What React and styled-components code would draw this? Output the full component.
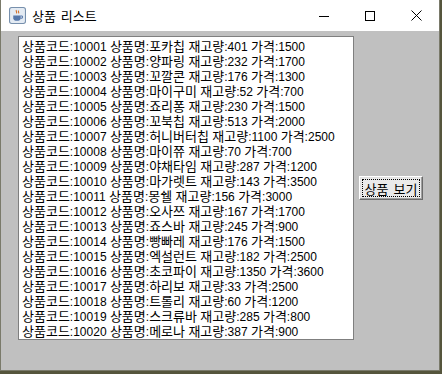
import React from "react";
import styled, { createGlobalStyle } from "styled-components";

const GlobalStyle = createGlobalStyle`
  html, body {
    margin: 0;
    padding: 0;
    background: #55553c;
    overflow: hidden;
  }
`;

const Window = styled.div`
  width: 438px;
  height: 370px;
  border: 1px solid #7a7a6a;
  border-top: none;
  background: #c0c0c0;
  display: flex;
  flex-direction: column;
`;

const TitleBar = styled.div`
  height: 31px;
  background: #fff;
  display: flex;
  align-items: center;
  padding-left: 8px;
  font-family: "Noto Sans CJK KR", sans-serif;
  font-size: 13px;
  color: #000;
`;

const TitleText = styled.span`
  margin-left: 6px;
  flex: 1;
  padding-bottom: 1px;
  word-spacing: 2px;
`;

const Controls = styled.div`
  display: flex;
  height: 100%;
`;

const CtrlButton = styled.div`
  width: 46px;
  height: 100%;
  display: flex;
  align-items: center;
  justify-content: center;
`;

const Content = styled.div`
  display: flex;
  align-items: center;
  padding: 5px 0 0 17px;
  gap: 5px;
`;

const ListBox = styled.div`
  width: 336px;
  height: 304px;
  box-sizing: border-box;
  border: 1px solid #7f7f7f;
  background: #fff;
  padding: 1px 0 0 3px;
  overflow: hidden;
`;

const Row = styled.div`
  height: 15px;
  line-height: 15px;
  font-family: "Liberation Sans", "Noto Sans CJK KR", sans-serif;
  font-size: 12px;
  color: #000;
  white-space: nowrap;
`;

const K = styled.span`
  font-family: "Noto Sans CJK KR", sans-serif;
  font-size: 13px;
`;

const Button = styled.button`
  width: 64px;
  height: 24px;
  padding: 2px;
  background: #eaeaea;
  border: 1px solid;
  border-color: #fff #6a6a6a #6a6a6a #fff;
  box-shadow: inset -1px -1px 0 #a0a0a0, inset 1px 1px 0 #e3e3e3;
  font-family: "Noto Sans CJK KR", sans-serif;
  font-size: 13px;
  color: #000;
  display: flex;
`;

const Focus = styled.span`
  flex: 1;
  border: 1px dotted #000;
  display: flex;
  align-items: center;
  justify-content: center;
  line-height: 1;
  word-spacing: 2px;
`;

const items = [
  ["10001", "포카칩", 401, 1500],
  ["10002", "양파링", 232, 1700],
  ["10003", "꼬깔콘", 176, 1300],
  ["10004", "마이구미", 52, 700],
  ["10005", "죠리퐁", 230, 1500],
  ["10006", "꼬북칩", 513, 2000],
  ["10007", "허니버터칩", 1100, 2500],
  ["10008", "마이쮸", 70, 700],
  ["10009", "야채타임", 287, 1200],
  ["10010", "마가렛트", 143, 3500],
  ["10011", "몽쉘", 156, 3000],
  ["10012", "오사쯔", 167, 1700],
  ["10013", "죠스바", 245, 900],
  ["10014", "빵빠레", 176, 1500],
  ["10015", "엑설런트", 182, 2500],
  ["10016", "초코파이", 1350, 3600],
  ["10017", "하리보", 33, 2500],
  ["10018", "트롤리", 60, 1200],
  ["10019", "스크류바", 285, 800],
  ["10020", "메로나", 387, 900],
];

const JavaIcon = () => (
  <svg width="17" height="17" viewBox="0 0 16 16">
    <rect x="0.5" y="0.5" width="15" height="15" rx="2" fill="#e4ebf3" stroke="#7790ad" />
    <path d="M7 3c-1 1 1 2 0 3M9 3.5c-.8.8.8 1.6 0 2.4" stroke="#d2691e" strokeWidth="1" fill="none" />
    <path d="M4 8h7v2.5c0 1.5-1.5 2.5-3.5 2.5S4 12 4 10.5z" fill="#5577aa" />
    <path d="M11 8.5h1.2c.8 0 .8 2-.6 2H11" stroke="#5577aa" fill="none" />
  </svg>
);

export default function App() {
  return (
    <>
      <GlobalStyle />
      <Window>
        <TitleBar>
          <JavaIcon />
          <TitleText>상품 리스트</TitleText>
          <Controls>
            <CtrlButton>
              <svg width="10" height="10" viewBox="0 0 10 10">
                <path d="M0 5.5h10" stroke="#000" strokeWidth="1" />
              </svg>
            </CtrlButton>
            <CtrlButton>
              <svg width="10" height="10" viewBox="0 0 10 10">
                <rect x="0.5" y="0.5" width="9" height="9" stroke="#000" fill="none" />
              </svg>
            </CtrlButton>
            <CtrlButton>
              <svg width="11" height="11" viewBox="0 0 11 11">
                <path d="M0.5 0.5l10 10M10.5 0.5l-10 10" stroke="#000" strokeWidth="1" />
              </svg>
            </CtrlButton>
          </Controls>
        </TitleBar>
        <Content>
          <ListBox>
            {items.map(([code, name, stock, price]) => (
              <Row key={code}>
                <K>상품코드</K>:{code} <K>상품명</K>:<K>{name}</K> <K>재고량</K>:{stock}{" "}
                <K>가격</K>:{price}
              </Row>
            ))}
          </ListBox>
          <Button>
            <Focus>상품 보기</Focus>
          </Button>
        </Content>
      </Window>
    </>
  );
}
